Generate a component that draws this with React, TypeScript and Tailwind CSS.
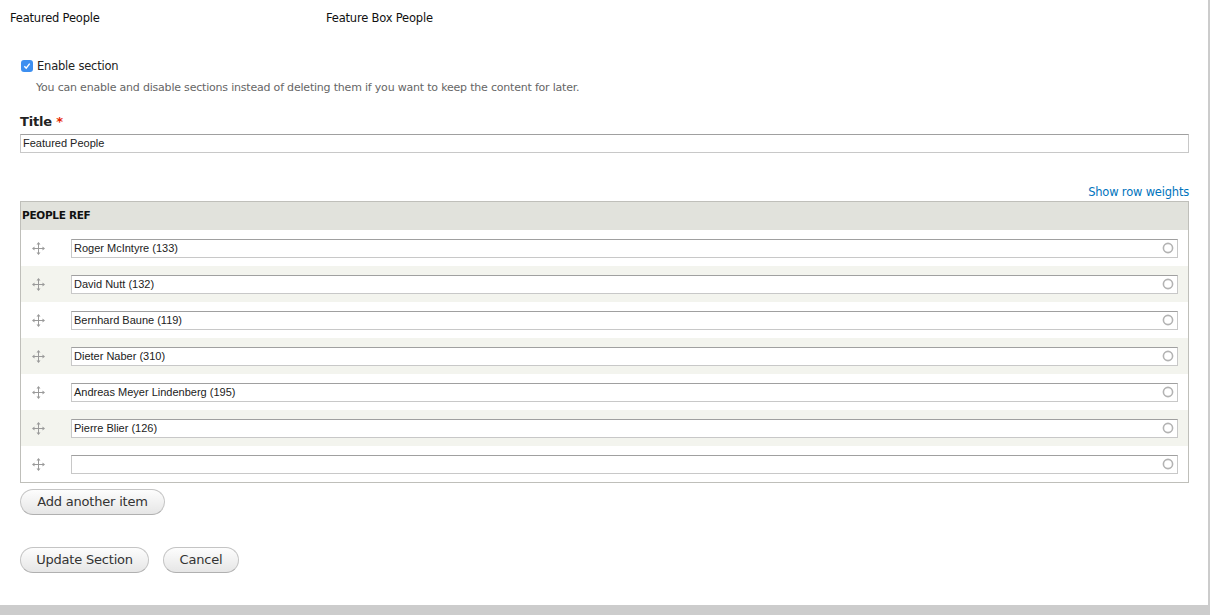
import React from 'react';

const people = [
  'Roger McIntyre (133)',
  'David Nutt (132)',
  'Bernhard Baune (119)',
  'Dieter Naber (310)',
  'Andreas Meyer Lindenberg (195)',
  'Pierre Blier (126)',
  '',
];

const ui = "font-['DejaVu_Sans',Verdana,sans-serif]";

function DragHandle() {
  return (
    <svg width="13" height="13" viewBox="0 0 13 13" className="text-[#9a9a9a]">
      <path d="M6.5 1v11M1 6.5h11" stroke="currentColor" strokeWidth="1" fill="none" />
      <path d="M6.5 0 L4.5 2.5 H8.5 Z M6.5 13 L4.5 10.5 H8.5 Z M0 6.5 L2.5 4.5 V8.5 Z M13 6.5 L10.5 4.5 V8.5 Z" fill="currentColor" />
    </svg>
  );
}

function Throbber() {
  return (
    <svg width="12" height="12" viewBox="0 0 12 12">
      <circle cx="6" cy="6" r="4.6" stroke="#b3b3b3" strokeWidth="1.6" fill="none" />
    </svg>
  );
}

function Button({ children, className }: { children: React.ReactNode; className: string }) {
  return (
    <button
      className={`${ui} ${className} h-[26px] rounded-[20px] border border-[#c4c4c4] border-b-[#b0b0b0] bg-gradient-to-b from-[#fdfdfd] to-[#e6e6e6] text-center text-[13px] tracking-[-0.2px] text-[#333]`}
    >
      {children}
    </button>
  );
}

export default function App() {
  return (
    <div className="flex h-[615px] w-full flex-col bg-white">
      <div className="flex-1 border-r-2 border-[#cccccc] pr-[19px]">
        <div className={`${ui} flex h-[36px] items-center pl-[10px] pt-[1px] text-[11.5px] tracking-[-0.2px] text-[#111]`}>
          <span className="w-[316px]">Featured People</span>
          <span>Feature Box People</span>
        </div>

        <div className="pl-[20px]">
          <div className={`${ui} mt-[22px] flex items-center gap-[4px] pl-[1px] text-[11.5px] tracking-[-0.2px] text-[#222]`}>
            <span className="flex h-[12px] w-[12px] items-center justify-center rounded-[3px] bg-[#3d8ff0]">
              <svg width="8" height="8" viewBox="0 0 8 8">
                <path d="M1.3 4.2 L3.2 6.1 L6.7 1.6" stroke="white" strokeWidth="1.4" fill="none" />
              </svg>
            </span>
            <span className="leading-[16px]">Enable section</span>
          </div>
          <p className={`${ui} mt-[6px] pl-[16px] text-[11px] leading-[16px] tracking-[-0.2px] text-[#666]`}>
            You can enable and disable sections instead of deleting them if you want to keep the content for later.
          </p>

          <div className={`${ui} mt-[18px] text-[13px] font-bold leading-[16px] tracking-[-0.2px] text-[#222]`}>
            Title <span className="text-[#e62600]">*</span>
          </div>
          <div className="mt-[4px] flex h-[19px] items-center border border-[#c8c8c8] border-t-[#a0a0a0] px-[2px] font-['Liberation_Sans',Arial,sans-serif] text-[11px] text-[#222]">
            Featured People
          </div>

          <div className={`${ui} mt-[31px] text-right text-[11.5px] leading-[16px] tracking-[-0.2px] text-[#0074bd]`}>
            Show row weights
          </div>

          <div className="mt-[1px] border border-[#bfbfba]">
            <div className={`${ui} flex h-[28px] items-center bg-[#e1e2dc] pl-[1px] text-[10.5px] font-bold tracking-[-0.3px] text-[#111]`}>
              PEOPLE REF
            </div>
            {people.map((p, i) => (
              <div
                key={i}
                className={`flex h-[36px] items-center ${i % 2 === 1 ? 'bg-[#f3f4ee]' : 'bg-white'}`}
              >
                <div className="flex w-[50px] items-center pl-[11px]">
                  <DragHandle />
                </div>
                <div className="mr-[10px] flex h-[19px] flex-1 items-center justify-between border border-[#c8c8c8] border-t-[#a0a0a0] bg-white pl-[2px] pr-[3px] font-['Liberation_Sans',Arial,sans-serif] text-[11px] text-[#222]">
                  <span>{p}</span>
                  <Throbber />
                </div>
              </div>
            ))}
          </div>

          <div className="mt-[5px]">
            <Button className="w-[145px]">Add another item</Button>
          </div>

          <div className="mt-[32px] flex gap-[14px]">
            <Button className="w-[129px]">Update Section</Button>
            <Button className="w-[76px]">Cancel</Button>
          </div>
        </div>
      </div>
      <div className="h-[10px] bg-[#cccccc]" />
    </div>
  );
}
